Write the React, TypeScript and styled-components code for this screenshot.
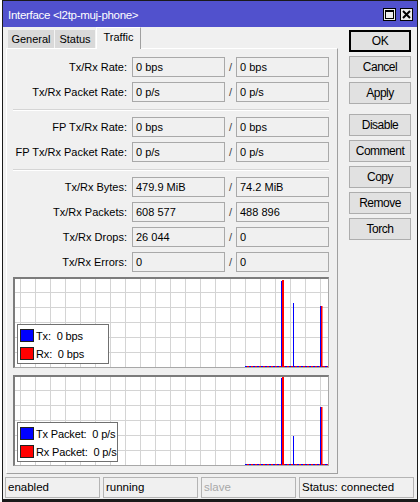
import React from "react";
import styled, { createGlobalStyle } from "styled-components";

const GlobalStyle = createGlobalStyle`
  html, body { margin: 0; padding: 0; background: #ffffff; }
  body {
    font-family: "Liberation Sans", Arial, sans-serif;
    font-size: 11px;
    color: #000;
  }
  * { box-sizing: border-box; }
`;

const Window = styled.div`
  margin-left: 2px;
  width: 416px;
  height: 502px;
  border: 1px solid #1a1a1a;
  border-bottom-width: 3px;
  background: #f0f0f0;
  display: flex;
  flex-direction: column;
`;

const TitleBar = styled.div`
  height: 26px;
  background: #5151cd;
  color: #fff;
  display: flex;
  align-items: center;
  padding: 0 4px 0 5px;
  & .title {
    flex: 1;
    font-size: 11.5px;
    letter-spacing: -0.3px;
    padding-top: 1px;
  }
`;

const TitleButton = styled.div`
  width: 13px;
  height: 13px;
  margin-left: 4px;
  margin-top: 1px;
  border: 1px solid #000;
  background: #ececec;
  display: flex;
  align-items: center;
  justify-content: center;
  & svg { display: block; }
`;

const Main = styled.div`
  display: flex;
  padding: 0 5px 0 3px;
`;

const LeftCol = styled.div`
  width: 332px;
  display: flex;
  flex-direction: column;
`;

const TabsRow = styled.div`
  display: flex;
  height: 21px;
  padding-left: 2px;
  align-items: flex-start;
`;

const Tab = styled.div<{ $active?: boolean; $w: number }>`
  width: ${(p) => p.$w}px;
  text-align: center;
  position: relative;
  z-index: ${(p) => (p.$active ? 1 : 0)};
  ${(p) =>
    p.$active
      ? `
    height: 22px;
    line-height: 19px;
    background: #f0f0f0;
    border-top: 1px solid #ffffff;
    border-left: 1px solid #ffffff;
    border-right: 1px solid #a0a0a0;
  `
      : `
    margin-top: 3px;
    height: 18px;
    line-height: 19px;
    background: #d9d9d9;
    border-right: 1px solid #f4f4f4;
  `}
`;

const Panel = styled.div`
  height: 426px;
  border: 1px solid;
  border-color: #ffffff #a0a0a0 #a0a0a0 #ffffff;
  padding: 8px 8px 0 6px;
  display: flex;
  flex-direction: column;
`;

const Row = styled.div`
  display: grid;
  grid-template-columns: 1fr 93px 11px 93px;
  height: 20px;
  margin-bottom: 5px;
  align-items: center;
`;

const Label = styled.div`
  text-align: right;
  padding-right: 5px;
  white-space: nowrap;
`;

const Field = styled.div`
  height: 20px;
  border: 1px solid #a9a9a9;
  background: #f0f0f0;
  padding-left: 3px;
  line-height: 18px;
  white-space: nowrap;
  overflow: hidden;
`;

const Slash = styled.div`
  text-align: center;
  color: #444;
`;

const Separator = styled.div`
  height: 2px;
  border-top: 1px solid #d5d5d5;
  border-bottom: 1px solid #ffffff;
  margin: 2px 0 6px;
`;

const GraphBox = styled.div<{ $gap: number }>`
  position: relative;
  width: 316px;
  height: 91px;
  margin-top: ${(p) => p.$gap}px;
  border-style: solid;
  border-width: 2px 1px 1px 2px;
  border-color: #7c7c7c #a8a8a8 #a8a8a8 #7c7c7c;
  background-color: #ffffff;
  background-image: linear-gradient(to right, #d4d4d4 1px, transparent 1px),
    linear-gradient(to bottom, #d4d4d4 1px, transparent 1px);
  background-size: 15px 15px;
  background-position: 5px 100%;
  & > svg {
    display: block;
    position: absolute;
    left: 0;
    top: 0;
  }
`;

const Legend = styled.div<{ $w: number }>`
  position: absolute;
  left: 2px;
  bottom: 3px;
  width: ${(p) => p.$w}px;
  background: #ffffff;
  border: 1px solid #707070;
  padding: 2px 2px 1px 2px;
  display: flex;
  flex-direction: column;
  gap: 1px;
`;

const LegendRow = styled.div`
  display: flex;
  align-items: center;
  height: 17px;
  white-space: pre;
  font-size: 11px;
  letter-spacing: -0.15px;
`;

const Swatch = styled.span<{ $color: string }>`
  flex-shrink: 0;
  width: 14px;
  height: 13px;
  background: ${(p) => p.$color};
  border: 1px solid #202020;
  margin-right: 2px;
`;

const RightCol = styled.div`
  width: 62px;
  margin-left: 11px;
  padding-top: 3px;
  display: flex;
  flex-direction: column;
`;

const Button = styled.div<{ $default?: boolean; $space?: number }>`
  height: 22px;
  margin-top: ${(p) => p.$space ?? 4}px;
  background: #e1e1e1;
  border: ${(p) => (p.$default ? "2px solid #000" : "1px solid #adadad")};
  display: flex;
  align-items: center;
  justify-content: center;
  font-size: 12px;
  letter-spacing: -0.5px;
`;

const StatusBar = styled.div`
  display: flex;
  gap: 3px;
  margin-top: 3px;
  padding: 0 3px 0 2px;
  height: 21px;
`;

const StatusCell = styled.div<{ $w?: number; $dim?: boolean }>`
  ${(p) => (p.$w ? `width: ${p.$w}px;` : "flex: 1;")}
  border: 1px solid #b4b4b4;
  padding-left: 2px;
  line-height: 19px;
  font-size: 11.5px;
  color: ${(p) => (p.$dim ? "#a8a8a8" : "#000")};
  white-space: nowrap;
`;

type Spike = { x: number; top: number; color: string; w?: number };

const BLUE = "#0000ff";
const RED = "#ff0000";

function Graph({
  gap,
  spikes,
  legend,
  legendWidth,
}: {
  gap: number;
  spikes: Spike[];
  legend: [string, string];
  legendWidth: number;
}) {
  const w = 313;
  const h = 88;
  const base = h - 1;
  return (
    <GraphBox $gap={gap}>
      <svg width={w} height={h} viewBox={`0 0 ${w} ${h}`}>
        <line x1={230} x2={w} y1={base + 0.5} y2={base + 0.5} stroke={BLUE} strokeDasharray="2 2" />
        <line
          x1={230}
          x2={w}
          y1={base + 0.5}
          y2={base + 0.5}
          stroke={RED}
          strokeDasharray="2 2"
          strokeDashoffset={2}
        />
        {spikes.map((s, i) => (
          <rect key={i} x={s.x} y={s.top} width={s.w ?? 1} height={base + 1 - s.top} fill={s.color} />
        ))}
      </svg>
      <Legend $w={legendWidth}>
        <LegendRow>
          <Swatch $color={BLUE} />
          {legend[0]}
        </LegendRow>
        <LegendRow>
          <Swatch $color={RED} />
          {legend[1]}
        </LegendRow>
      </Legend>
    </GraphBox>
  );
}

const rows1 = [
  ["Tx/Rx Rate:", "0 bps", "0 bps"],
  ["Tx/Rx Packet Rate:", "0 p/s", "0 p/s"],
];
const rows2 = [
  ["FP Tx/Rx Rate:", "0 bps", "0 bps"],
  ["FP Tx/Rx Packet Rate:", "0 p/s", "0 p/s"],
];
const rows3 = [
  ["Tx/Rx Bytes:", "479.9 MiB", "74.2 MiB"],
  ["Tx/Rx Packets:", "608 577", "488 896"],
  ["Tx/Rx Drops:", "26 044", "0"],
  ["Tx/Rx Errors:", "0", "0"],
];

function FieldRows({ rows }: { rows: string[][] }) {
  return (
    <>
      {rows.map(([label, a, b]) => (
        <Row key={label}>
          <Label>{label}</Label>
          <Field>{a}</Field>
          <Slash>/</Slash>
          <Field>{b}</Field>
        </Row>
      ))}
    </>
  );
}

export default function App() {
  return (
    <>
      <GlobalStyle />
      <Window>
        <TitleBar>
          <span className="title">Interface &lt;l2tp-muj-phone&gt;</span>
          <TitleButton>
            <svg width="9" height="9" viewBox="0 0 9 9">
              <rect x="0.5" y="0.5" width="8" height="8" fill="none" stroke="#000" />
              <rect x="0" y="0" width="9" height="2" fill="#000" />
            </svg>
          </TitleButton>
          <TitleButton>
            <svg width="9" height="9" viewBox="0 0 9 9">
              <path d="M1 1 L8 8 M8 1 L1 8" stroke="#000" strokeWidth="2" />
            </svg>
          </TitleButton>
        </TitleBar>
        <Main>
          <LeftCol>
            <TabsRow>
              <Tab $w={47}>General</Tab>
              <Tab $w={41}>Status</Tab>
              <Tab $w={45} $active>
                Traffic
              </Tab>
            </TabsRow>
            <Panel>
              <FieldRows rows={rows1} />
              <Separator />
              <FieldRows rows={rows2} />
              <Separator />
              <FieldRows rows={rows3} />
              <Graph
                gap={0}
                legendWidth={92}
                legend={["Tx:  0 bps", "Rx:  0 bps"]}
                spikes={[
                  { x: 266, top: 2, color: BLUE },
                  { x: 267, top: 1, color: RED, w: 2 },
                  { x: 278, top: 24, color: BLUE },
                  { x: 305, top: 27, color: BLUE },
                  { x: 306, top: 27, color: RED, w: 1.5 },
                ]}
              />
              <Graph
                gap={7}
                legendWidth={101}
                legend={["Tx Packet:  0 p/s", "Rx Packet:  0 p/s"]}
                spikes={[
                  { x: 266, top: 1, color: BLUE },
                  { x: 267, top: 0, color: RED, w: 2 },
                  { x: 278, top: 59, color: BLUE },
                  { x: 305, top: 30, color: BLUE },
                  { x: 306, top: 30, color: RED, w: 1.5 },
                ]}
              />
            </Panel>
          </LeftCol>
          <RightCol>
            <Button $default $space={0}>OK</Button>
            <Button>Cancel</Button>
            <Button>Apply</Button>
            <Button $space={10}>Disable</Button>
            <Button>Comment</Button>
            <Button>Copy</Button>
            <Button>Remove</Button>
            <Button>Torch</Button>
          </RightCol>
        </Main>
        <StatusBar>
          <StatusCell $w={95}>enabled</StatusCell>
          <StatusCell $w={95}>running</StatusCell>
          <StatusCell $w={95} $dim>
            slave
          </StatusCell>
          <StatusCell>Status: connected</StatusCell>
        </StatusBar>
      </Window>
    </>
  );
}
